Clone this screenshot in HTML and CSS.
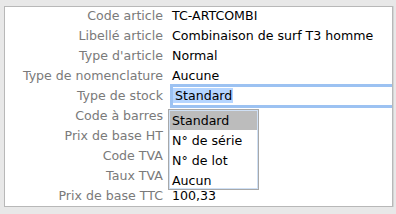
FILE: index.html
```html
<!DOCTYPE html>
<html lang="fr">
<head>
    <meta charset="UTF-8">
    <title>Fiche article</title>
    <link rel="stylesheet" href="styles.css">
</head>
<body>
    <div class="panel">
        <div class="form">
            <div class="label">Code article</div>
            <div class="value">TC-ARTCOMBI</div>
            <div class="label">Libellé article</div>
            <div class="value">Combinaison de surf T3 homme</div>
            <div class="label">Type d'article</div>
            <div class="value">Normal</div>
            <div class="label">Type de nomenclature</div>
            <div class="value">Aucune</div>
            <div class="label">Type de stock</div>
            <div class="value focus-cell">
                <div class="field"><span class="selected">Standard</span></div>
                <ul class="popup">
                    <li class="current">Standard</li>
                    <li>N° de série</li>
                    <li>N° de lot</li>
                    <li class="last">Aucun</li>
                </ul>
            </div>
            <div class="label">Code à barres</div>
            <div class="value"></div>
            <div class="label">Prix de base HT</div>
            <div class="value"></div>
            <div class="label">Code TVA</div>
            <div class="value"></div>
            <div class="label">Taux TVA</div>
            <div class="value"></div>
            <div class="label">Prix de base TTC</div>
            <div class="value">100,33</div>
        </div>
    </div>
</body>
</html>
```

FILE: styles.css
```css
body {
    margin: 0;
    background: #e8e8e8;
    font-family: "DejaVu Sans", sans-serif;
    font-size: 12.6px;
}
.panel {
    margin: 6px 0 0 4px;
    width: 387px;
    height: 199px;
    background: #fff;
    border: 1px solid #b8b8b8;
    box-shadow: 1px 0 0 #d4d4d4;
}
.form {
    display: grid;
    grid-template-columns: 158px 1fr;
    grid-auto-rows: 20px;
    column-gap: 9px;
    margin-top: -1px;
}
.label {
    text-align: right;
    color: #7a7a7a;
    line-height: 20px;
    white-space: nowrap;
}
.value {
    color: #000;
    line-height: 20px;
    white-space: nowrap;
}
.focus-cell {
    position: relative;
}
.field {
    margin-left: -2px;
    margin-top: -2px;
    height: 18px;
    border: 3px solid #9cc2f2;
    border-right: none;
    line-height: 18px;
}
.selected {
    background: #b5d5ff;
    padding: 0 1px 0 2px;
}
.popup {
    position: absolute;
    left: -4px;
    top: 23px;
    width: 89px;
    margin: 0;
    padding: 0;
    list-style: none;
    background: #fff;
    border: 1px solid #a8a8a8;
    box-shadow: inset 0 0 0 1px #cfe0f5;
}
.popup li {
    height: 19px;
    padding-top: 1px;
    line-height: 20px;
    padding-left: 2px;
    margin: 0 1px;
}
.popup li.current {
    background: #bcbcbc;
    margin-top: 1px;
    padding-top: 0;
    height: 19px;
    line-height: 19px;
}
.popup li.last {
    height: 18px;
}
```
